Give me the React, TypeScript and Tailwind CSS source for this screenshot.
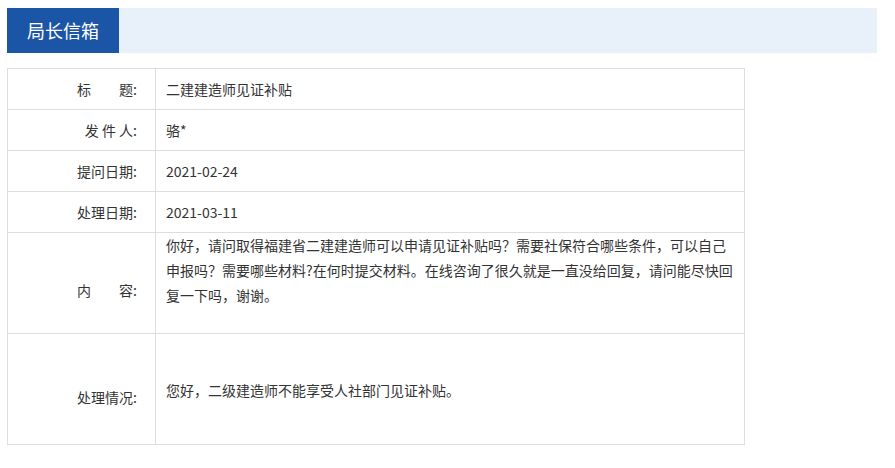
const rows: { label: string; value: string }[] = [
  { label: "标\u3000\u3000题:", value: "二建建造师见证补贴" },
  { label: "发 件 人:", value: "骆*" },
  { label: "提问日期:", value: "2021-02-24" },
  { label: "处理日期:", value: "2021-03-11" },
];

const content =
  "你好，请问取得福建省二建建造师可以申请见证补贴吗？需要社保符合哪些条件，可以自己申报吗？需要哪些材料?在何时提交材料。在线咨询了很久就是一直没给回复，请问能尽快回复一下吗，谢谢。";

export default function App() {
  return (
    <div
      className="min-h-screen bg-white pt-2 pl-[7px] text-[14px] text-[#333]"
      style={{ fontFamily: '"Noto Sans CJK SC", "Microsoft YaHei", sans-serif' }}
    >
      {/* title bar */}
      <div className="flex h-[45px] w-[870px] bg-[#e8f0fa]">
        <div className="flex w-[112px] items-center justify-center bg-[#1b55a5] text-[18px] text-white">
          局长信箱
        </div>
      </div>

      <div className="mt-[15px] grid w-[738px] grid-cols-[148px_1fr] border-l border-t border-[#dddddd]">
        {rows.map((row) => (
          <div key={row.label} className="contents">
            <div className="flex h-[41px] items-center justify-end whitespace-pre border-b border-r border-[#dddddd] pr-[18px]">
              {row.label}
            </div>
            <div className="flex h-[41px] items-center border-b border-r border-[#dddddd] px-[10px]">
              {row.value}
            </div>
          </div>
        ))}

        <div className="flex h-[101px] items-center justify-end border-b border-r border-[#dddddd] pr-[18px] pt-[14px]">
          内{"\u3000\u3000"}容:
        </div>
        <div className="h-[101px] border-b border-r border-[#dddddd] px-[10px] leading-[25px]">
          {content}
        </div>

        <div className="flex h-[111px] items-center justify-end border-b border-r border-[#dddddd] pr-[18px] pt-[16px]">
          处理情况:
        </div>
        <div className="flex h-[111px] items-center border-b border-r border-[#dddddd] px-[10px] pt-[3px]">
          您好，二级建造师不能享受人社部门见证补贴。
        </div>
      </div>
    </div>
  );
}
